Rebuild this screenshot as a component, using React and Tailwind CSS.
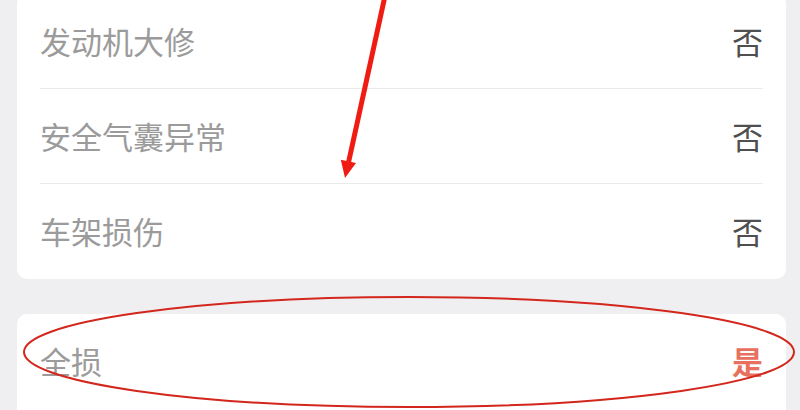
const cjk = { fontFamily: '"Noto Sans CJK SC", "Noto Sans", sans-serif' };

const rows = [
  { label: "发动机大修", value: "否" },
  { label: "安全气囊异常", value: "否" },
  { label: "车架损伤", value: "否" },
];

function Row({ label, value, danger, last }) {
  return (
    <div className="px-[23px]">
      <div
        className={
          "flex h-[95px] items-center justify-between " +
          (last ? "" : "border-b border-[#ebebeb]")
        }
      >
        <span className="text-[31px] text-[#9b9b9b]">{label}</span>
        <span
          className={
            danger
              ? "text-[31px] font-bold text-[#e8705f]"
              : "text-[31px] text-[#4f4f4f]"
          }
        >
          {value}
        </span>
      </div>
    </div>
  );
}

export default function App() {
  return (
    <div
      className="relative h-[410px] w-[800px] overflow-hidden bg-[#efeff1]"
      style={cjk}
    >
      <div className="mt-[-6px] flex flex-col gap-[35px] pl-[17px] pr-[14px]">
        <div className="rounded-[10px] bg-white">
          {rows.map((r, i) => (
            <Row key={r.label} {...r} last={i === rows.length - 1} />
          ))}
        </div>
        <div className="h-[120px] rounded-[10px] bg-white">
          <Row label="全损" value="是" danger last />
        </div>
      </div>

      <svg
        className="pointer-events-none absolute left-0 top-0"
        width="800"
        height="410"
        viewBox="0 0 800 410"
      >
        <line
          x1="385"
          y1="-4"
          x2="348.6"
          y2="162"
          stroke="#f01c14"
          strokeWidth="5"
        />
        <polygon points="345,178 340.8,159.7 356,163.1" fill="#f01c14" />
        <ellipse
          cx="409"
          cy="352"
          rx="385"
          ry="55"
          fill="none"
          stroke="#d3261c"
          strokeWidth="2"
        />
      </svg>
    </div>
  );
}
